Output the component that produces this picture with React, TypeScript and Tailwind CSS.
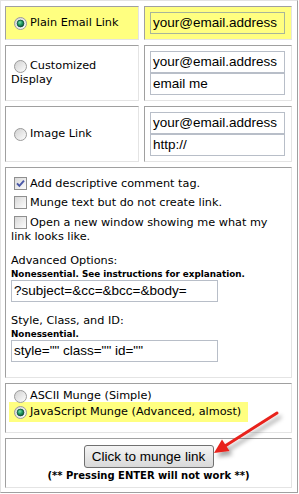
import React from 'react';

const Radio = ({ checked }: { checked?: boolean }) => (
  <svg width="13" height="13" viewBox="0 0 13 13" className="shrink-0">
    <circle cx="6.5" cy="6.5" r="6" fill="url(#radioFill)" stroke="#9b9b9b" />
    {checked && (
      <>
        <circle cx="6.5" cy="6.5" r="4.3" fill="#e9efe9" />
        <circle cx="6.5" cy="6.5" r="3.4" fill="url(#radioDot)" stroke="#0d4a32" strokeWidth="0.8" />
      </>
    )}
  </svg>
);

const Check = ({ checked }: { checked?: boolean }) => (
  <svg width="13" height="13" viewBox="0 0 13 13" className="shrink-0">
    <rect x="0.5" y="0.5" width="12" height="12" fill="url(#boxFill)" stroke="#8f8f8f" />
    {checked && <path d="M3 6.3 L5.4 8.9 L10 3.6" fill="none" stroke="#4a58a8" strokeWidth="1.9" />}
  </svg>
);

const Field = ({ value, w = 'w-[135px]', yellow }: { value: string; w?: string; yellow?: boolean }) => (
  <div
    className={`${w} h-[22px] border pl-[2px] flex items-center text-[13.5px] text-black font-['Liberation_Sans',Arial,sans-serif] whitespace-nowrap overflow-hidden ${
      yellow ? 'bg-[#ffff80] border-[#a7b59a]' : 'bg-white border-[#b8bec8]'
    }`}
  >
    {value}
  </div>
);

const cell = 'border border-t-[#a0a0a0] border-l-[#a0a0a0] border-b-[#e4e4e4] border-r-[#e4e4e4] p-[5px]';

export default function App() {
  return (
    <div className="bg-white w-[299px] h-[494px] font-['DejaVu_Sans',Verdana,sans-serif] text-[11.25px] leading-[14px] text-black relative">
      <svg width="0" height="0" className="absolute">
        <defs>
          <linearGradient id="radioFill" x1="0" y1="0" x2="1" y2="1">
            <stop offset="0" stopColor="#cfcfcf" />
            <stop offset="1" stopColor="#ffffff" />
          </linearGradient>
          <radialGradient id="radioDot" cx="0.4" cy="0.35" r="0.7">
            <stop offset="0" stopColor="#7fe0a8" />
            <stop offset="0.5" stopColor="#1f9a62" />
            <stop offset="1" stopColor="#0c4f34" />
          </radialGradient>
          <linearGradient id="boxFill" x1="0" y1="0" x2="1" y2="1">
            <stop offset="0" stopColor="#d6d6d6" />
            <stop offset="1" stopColor="#ffffff" />
          </linearGradient>
        </defs>
      </svg>

      <div className="w-[298px] border border-t-[#e3e3e3] border-l-[#e3e3e3] border-b-[#a0a0a0] border-r-[#a0a0a0] pt-[5px] pl-[4px] pr-[5px] pb-[4px] flex flex-col gap-[5px]">
        <div className="grid grid-cols-[134px_148px] gap-[5px]">
          <div className={`${cell} h-[34px] bg-[#ffff80] flex items-center`}>
            <span className="ml-[3px] mr-[3px] flex"><Radio checked /></span>
            <span>Plain Email Link</span>
          </div>
          <div className={`${cell} h-[34px] bg-[#ffff80]`}>
            <Field value="your@email.address" yellow />
          </div>

          <div className={`${cell} h-[56px] flex flex-col justify-center`}>
            <div className="flex items-center">
              <span className="ml-[3px] mr-[3px] flex"><Radio /></span>
              <span>Customized</span>
            </div>
            <div>Display</div>
          </div>
          <div className={`${cell} h-[56px]`}>
            <Field value="your@email.address" />
            <Field value="email me" />
          </div>

          <div className={`${cell} h-[56px] flex items-center`}>
            <span className="ml-[3px] mr-[3px] flex"><Radio /></span>
            <span>Image Link</span>
          </div>
          <div className={`${cell} h-[56px]`}>
            <Field value="your@email.address" />
            <Field value="http://" />
          </div>
        </div>

        <div className={`${cell} h-[211px]`}>
          <div className="mt-[4px] flex items-start">
            <span className="ml-[3px] mr-[3px] flex"><Check checked /></span>
            <span>Add descriptive comment tag.</span>
          </div>
          <div className="mt-[5px] flex items-start">
            <span className="ml-[3px] mr-[3px] flex"><Check /></span>
            <span>Munge text but do not create link.</span>
          </div>
          <div className="mt-[6px]">
            <div className="flex items-start">
              <span className="ml-[3px] mr-[3px] flex"><Check /></span>
              <span>Open a new window showing me what my</span>
            </div>
            <div>link looks like.</div>
          </div>

          <div className="mt-[10px]">Advanced Options:</div>
          <div className="font-bold text-[8.8px] leading-[12px]">Nonessential. See instructions for explanation.</div>
          <Field value="?subject=&cc=&bcc=&body=" w="w-[207px]" />

          <div className="mt-[12px]">Style, Class, and ID:</div>
          <div className="font-bold text-[8.8px] leading-[12px]">Nonessential.</div>
          <Field value={'style="" class="" id=""'} w="w-[207px]" />
        </div>

        <div className={`${cell} h-[50px]`}>
          <div className="mt-[1px] h-[12px] flex items-center">
            <span className="ml-[3px] mr-[3px] flex"><Radio /></span>
            <span>ASCII Munge (Simple)</span>
          </div>
          <div className="-ml-[2px] w-[239px] h-[20px] bg-[#ffff80] flex items-center pl-[5px]">
            <span className="mr-[3px] flex"><Radio checked /></span>
            <span>JavaScript Munge (Advanced, almost)</span>
          </div>
        </div>

        <div className={`${cell} h-[50px] flex flex-col items-center`}>
          <button className="mt-[1px] w-[130px] h-[23px] rounded-[3px] border border-[#707070] bg-gradient-to-b from-[#f4f4f4] to-[#d9d9d9] text-[13.5px] text-black font-['Liberation_Sans',Arial,sans-serif] leading-none">
            Click to munge link
          </button>
          <div className="mt-[2px] font-bold text-[10px] leading-[12px]">(** Pressing ENTER will not work **)</div>
        </div>
      </div>

      <svg className="absolute left-0 top-0 pointer-events-none" width="299" height="494">
        <defs>
          <filter id="arrowShadow" x="-20%" y="-20%" width="160%" height="160%">
            <feDropShadow dx="3" dy="4" stdDeviation="2" floodColor="#000" floodOpacity="0.35" />
          </filter>
        </defs>
        <g filter="url(#arrowShadow)">
          <line x1="277" y1="413" x2="225" y2="446" stroke="#e8241c" strokeWidth="3" strokeLinecap="round" />
          <polygon points="214,453 229.5,451 222,439.5" fill="#e8241c" />
        </g>
      </svg>
    </div>
  );
}
